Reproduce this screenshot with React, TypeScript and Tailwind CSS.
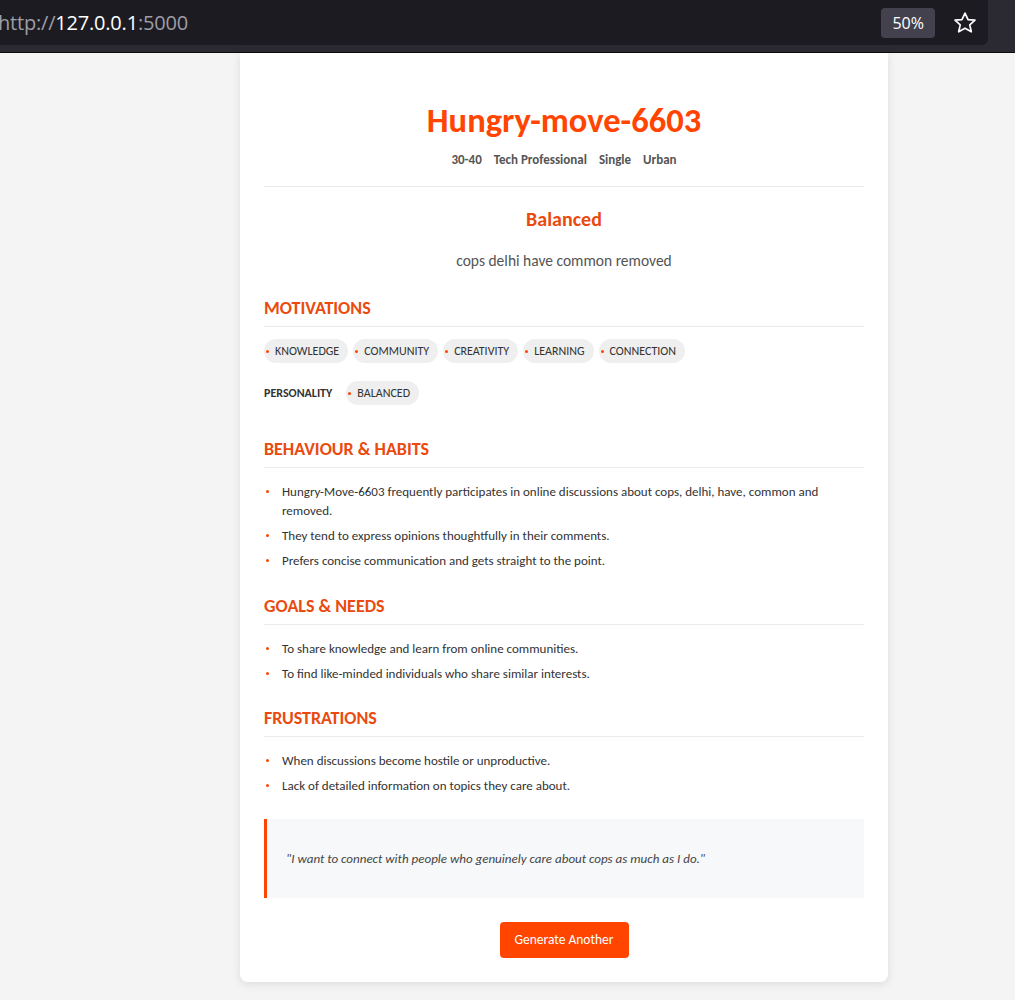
import React from "react";

const font = { fontFamily: "Calibri, Carlito, Lato, 'Open Sans', sans-serif" };

const motivations = ["Knowledge", "Community", "Creativity", "Learning", "Connection"];

const sections = [
  {
    title: "Behaviour & Habits",
    gap: "mt-[34px]",
    items: [
      "Hungry-Move-6603 frequently participates in online discussions about cops, delhi, have, common and removed.",
      "They tend to express opinions thoughtfully in their comments.",
      "Prefers concise communication and gets straight to the point.",
    ],
  },
  {
    title: "Goals & Needs",
    gap: "mt-[26px]",
    items: [
      "To share knowledge and learn from online communities.",
      "To find like-minded individuals who share similar interests.",
    ],
  },
  {
    title: "Frustrations",
    gap: "mt-[25px]",
    items: [
      "When discussions become hostile or unproductive.",
      "Lack of detailed information on topics they care about.",
    ],
  },
];

function Chip({ label }: { label: string }) {
  return (
    <span className="flex items-center h-6 rounded-full bg-[#efefef] pl-[2px] pr-[9px] text-[12px] uppercase text-[#333]">
      <span className="w-[3px] h-[3px] rounded-full bg-[#ff4500] mr-[6px]" />
      {label}
    </span>
  );
}

function SectionTitle({ children }: { children: React.ReactNode }) {
  return (
    <h2 className="text-[18px] leading-5 font-bold uppercase text-[#ea4a0e] pb-2 border-b border-[#ebebeb]">
      {children}
    </h2>
  );
}

function BrowserBar() {
  return (
    <div className="h-[53px] bg-[#2b2a33] border-b border-[#0c0c0d]">
      <div className="h-[45px] w-[988px] bg-[#1c1b22] rounded-br-md flex items-center justify-between pr-[10px]">
        <div className="ml-[-2px] text-[20px] tracking-[-0.01em]" style={{ fontFamily: "'Open Sans', sans-serif" }}>
          <span className="text-[#9e9ea6]">http://</span>
          <span className="text-white">127.0.0.1</span>
          <span className="text-[#9e9ea6]">:5000</span>
        </div>
        <div className="flex items-center gap-[17px]">
          <span
            className="h-[30px] px-[11px] rounded bg-[#42414d] text-white text-[16px] flex items-center"
            style={{ fontFamily: "'Open Sans', sans-serif" }}
          >
            50%
          </span>
          <svg width="26" height="26" viewBox="0 0 24 24" fill="none" stroke="#fbfbfe" strokeWidth="1.6" strokeLinejoin="round">
            <path d="M12 2.8l2.8 6 6.4.6-4.8 4.3 1.4 6.4L12 16.8l-5.8 3.3 1.4-6.4-4.8-4.3 6.4-.6z" />
          </svg>
        </div>
      </div>
    </div>
  );
}

export default function App() {
  return (
    <div className="min-h-[1000px] bg-[#f4f4f4]" style={font}>
      <BrowserBar />
      <div className="pl-[240px]">
        <div className="w-[648px] bg-white rounded-b-lg shadow-[0_2px_10px_rgba(0,0,0,0.1)] px-6 pt-[48px] pb-6">
          {/* header */}
          <div className="text-center border-b border-[#ebebeb] pb-[17px]">
            <h1 className="text-[34.5px] leading-[38px] font-bold text-[#ff4500]">Hungry-move-6603</h1>
            <div className="mt-[12px] flex justify-center gap-3 text-[13px] leading-[18px] font-bold text-[#555]">
              <span>30-40</span>
              <span>Tech Professional</span>
              <span>Single</span>
              <span>Urban</span>
            </div>
          </div>

          <div className="text-center mt-[21px]">
            <h3 className="text-[20px] leading-[22px] font-bold text-[#ea4a0e]">Balanced</h3>
            <p className="mt-[21px] text-[15.5px] leading-5 text-[#555]">cops delhi have common removed</p>
          </div>

          {/* motivations */}
          <div className="mt-[27px]">
            <SectionTitle>Motivations</SectionTitle>
            <div className="mt-3 flex flex-wrap gap-[5px]">
              {motivations.map((m) => (
                <Chip key={m} label={m} />
              ))}
            </div>
            <div className="mt-[18px] flex items-center gap-[14px]">
              <span className="text-[12px] font-bold uppercase text-[#333]">Personality</span>
              <Chip label="Balanced" />
            </div>
          </div>

          {sections.map((s) => (
            <div key={s.title} className={s.gap}>
              <SectionTitle>{s.title}</SectionTitle>
              <ul className="mt-[14px] flex flex-col gap-[6px]">
                {s.items.map((it) => (
                  <li key={it} className="flex text-[13px] leading-[19px] text-[#333]">
                    <span className="w-[18px] shrink-0 flex pt-[8px] pl-[2px]">
                      <span className="w-[3px] h-[3px] rounded-full bg-[#ff4500]" />
                    </span>
                    <span className="pr-[40px]">{it}</span>
                  </li>
                ))}
              </ul>
            </div>
          ))}

          {/* quote */}
          <div className="mt-6 bg-[#f7f8f9] border-l-[3px] border-[#ff4500] px-[19px] py-[30px]">
            <p className="text-[13px] leading-[19px] italic text-[#444]">
              "I want to connect with people who genuinely care about cops as much as I do."
            </p>
          </div>

          <div className="mt-6 flex justify-center">
            <button className="h-9 w-[129px] rounded bg-[#ff4500] text-white text-[13.5px]">Generate Another</button>
          </div>
        </div>
      </div>
    </div>
  );
}
